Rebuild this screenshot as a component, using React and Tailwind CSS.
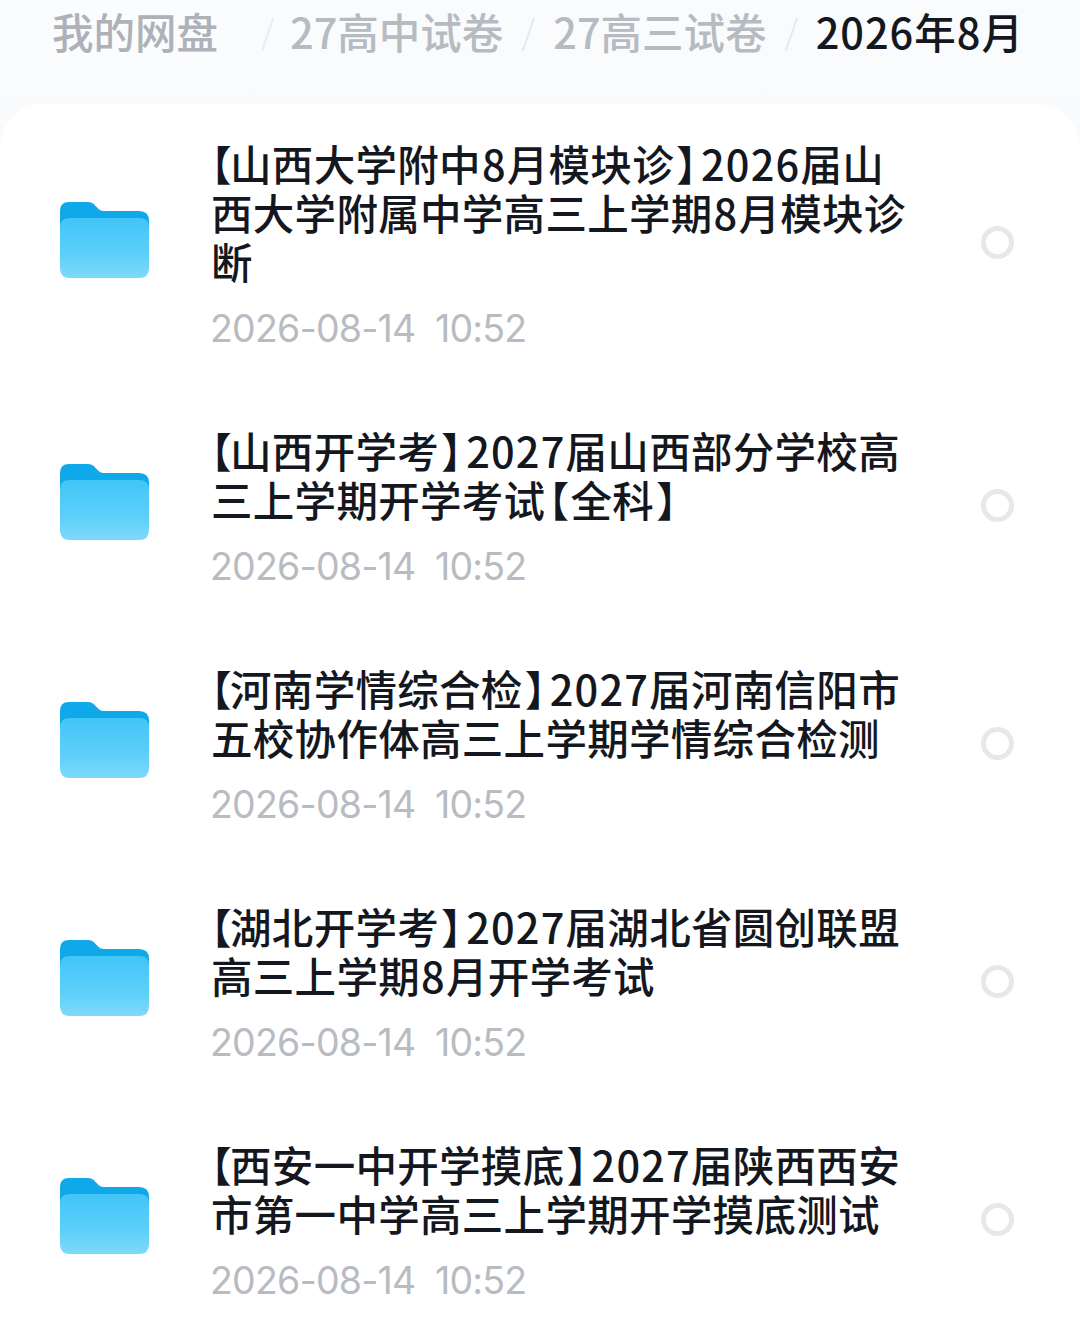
const FONT = "font-['Noto_Sans_CJK_SC','Noto_Sans',sans-serif]";

const rows = [
  { lines: ["【山西大学附中8月模块诊】2026届山", "西大学附属中学高三上学期8月模块诊", "断"] },
  { lines: ["【山西开学考】2027届山西部分学校高", "三上学期开学考试【全科】"] },
  { lines: ["【河南学情综合检】2027届河南信阳市", "五校协作体高三上学期学情综合检测"] },
  { lines: ["【湖北开学考】2027届湖北省圆创联盟", "高三上学期8月开学考试"] },
  { lines: ["【西安一中开学摸底】2027届陕西西安", "市第一中学高三上学期开学摸底测试"] },
];

function Folder({ id }) {
  return (
    <svg width="89" height="78" viewBox="0 0 90 78" preserveAspectRatio="none" className="shrink-0 block mb-[12px] mr-px">
      <defs>
        <linearGradient id={id} x1="0" y1="0" x2="0" y2="1">
          <stop offset="0" stopColor="#42c5f7" />
          <stop offset="0.6" stopColor="#5ccffa" />
          <stop offset="1" stopColor="#7fd9f9" />
        </linearGradient>
      </defs>
      <path d="M0 40 V10 Q0 1 9 1 H28 Q33 1 36 5 L39 8 Q41 10 44 10 H80 Q90 10 90 20 V40 Z" fill="#0fa8e8" />
      <path d="M0 26 Q0 17 10 17 H80 Q90 17 90 26 V67 Q90 77 80 77 H10 Q0 77 0 67 Z" fill={`url(#${id})`} />
    </svg>
  );
}

function Line({ text }) {
  const parts = text.split(/([【】]|\d+)/);
  return (
    <div>
      {parts.map((p, i) => {
        if (p === "【") {
          const atStart = i === 1 && parts[0] === "";
          return (
            <span key={i} className={`[font-feature-settings:'halt'] ${atStart ? "-mr-[2px]" : "ml-[3px] mr-[1px]"}`}>{p}</span>
          );
        }
        if (p === "】") {
          return <span key={i} className="[font-feature-settings:'halt'] ml-[2px] mr-[4px]">{p}</span>;
        }
        if (/^\d+$/.test(p)) {
          return <span key={i} className={`tracking-[1.2px] ${p.length === 1 ? "ml-[1px]" : ""}`}>{p}</span>;
        }
        return <span key={i}>{p}</span>;
      })}
    </div>
  );
}

function Row({ lines, index }) {
  return (
    <div className="flex items-center pl-[60px] pr-[66px] pt-[35px] pb-[39px]">
      <Folder id={`folder-${index}`} />
      <div className="ml-[61px] flex-1 min-w-0">
        <div className="text-[41.5px] leading-[49px] text-[#14181e] whitespace-nowrap tracking-[0.3px] font-medium">
          {lines.map((line) => (
            <Line key={line} text={line} />
          ))}
        </div>
        <div className="mt-[19px] -ml-[1px] font-['Inter',sans-serif] text-[37.5px] leading-[47px] tracking-[-0.8px] text-[#b8bcc2] font-normal whitespace-pre">
          2026-08-14  10:52
        </div>
      </div>
      <div className="w-[33px] h-[33px] rounded-full border-[5px] border-[#e6e8ea] shrink-0 mb-[6px]" />
    </div>
  );
}

export default function App() {
  return (
    <div className={`w-[1080px] h-[1328px] overflow-hidden bg-gradient-to-b from-[#fafbfc] to-[#f5f7f9] ${FONT}`}>
      <div className="h-[104px] flex items-start text-[41.5px] leading-[62px] whitespace-nowrap font-medium">
        <div className="ml-[20px] w-[225px] h-[70px] pl-[32px] rounded-b-[24px] bg-[#fbfcfd] text-[#aeb2b8]">我的网盘</div>
        <span className="w-[45px] text-center text-[34px] text-[#e8ebee] font-light">/</span>
        <span className="text-[#b6bbc1]">27高中试卷</span>
        <span className="w-[50px] text-center text-[34px] text-[#e4e7ea] font-light">/</span>
        <span className="text-[#b6bbc1]">27高三试卷</span>
        <span className="w-[49px] text-center text-[34px] text-[#e4e7ea] font-light">/</span>
        <span className="text-[#14181e] tracking-[1px]">2026年8月</span>
      </div>
      <div className="bg-white rounded-t-[44px]">
        {rows.map((r, i) => (
          <Row key={i} index={i} lines={r.lines} />
        ))}
      </div>
    </div>
  );
}
